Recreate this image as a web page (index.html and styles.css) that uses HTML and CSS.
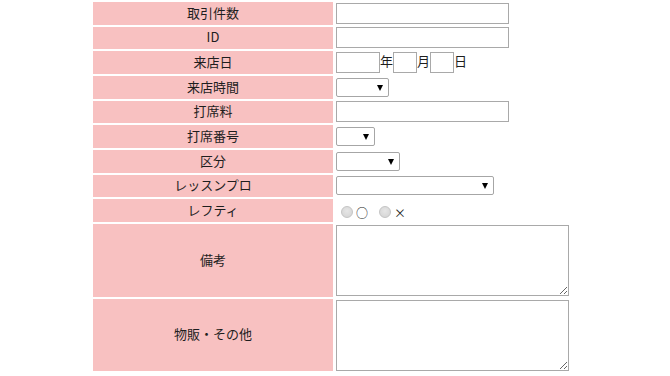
FILE: index.html
```html
<!DOCTYPE html>
<html lang="ja">
<head>
<meta charset="utf-8">
<title>来店登録</title>
<link rel="stylesheet" href="styles.css">
</head>
<body>
<table class="form">
  <tr class="row">
    <th class="label">取引件数</th>
    <td class="value"><input class="text" type="text"></td>
  </tr>
  <tr class="row">
    <th class="label">ID</th>
    <td class="value"><input class="text" type="text"></td>
  </tr>
  <tr class="row">
    <th class="label">来店日</th>
    <td class="value"><input class="text year" type="text">年<input class="text short" type="text">月<input class="text short" type="text">日</td>
  </tr>
  <tr class="row">
    <th class="label">来店時間</th>
    <td class="value"><span class="select w-time"><select><option></option></select></span></td>
  </tr>
  <tr class="row">
    <th class="label">打席料</th>
    <td class="value"><input class="text" type="text"></td>
  </tr>
  <tr class="row">
    <th class="label">打席番号</th>
    <td class="value"><span class="select w-seat"><select><option></option></select></span></td>
  </tr>
  <tr class="row">
    <th class="label">区分</th>
    <td class="value"><span class="select w-kind"><select><option></option></select></span></td>
  </tr>
  <tr class="row">
    <th class="label">レッスンプロ</th>
    <td class="value"><span class="select w-pro"><select><option></option></select></span></td>
  </tr>
  <tr class="row">
    <th class="label">レフティ</th>
    <td class="value"><label class="opt"><input class="radio" type="radio" name="lefty"><span class="mark">○</span></label><label class="opt"><input class="radio" type="radio" name="lefty"><span class="mark">×</span></label></td>
  </tr>
  <tr class="row tall">
    <th class="label">備考</th>
    <td class="value top"><textarea class="area"></textarea></td>
  </tr>
  <tr class="row tall">
    <th class="label">物販・その他</th>
    <td class="value top"><textarea class="area"></textarea></td>
  </tr>
</table>
</body>
</html>
```

FILE: styles.css
```css
html, body {
  background: #ffffff;
}
body {
  margin: 0;
  font-family: "Noto Sans CJK JP", "Noto Sans", sans-serif;
  font-size: 13px;
  color: #1e1e1e;
}
.form {
  margin-left: 91px;
  border-collapse: separate;
  border-spacing: 2px;
}
.label {
  width: 240px;
  height: 21.67px;
  padding: 0 0 1px;
  background: #f8c1c1;
  font-weight: normal;
  text-align: center;
  vertical-align: middle;
  line-height: 16px;
}
.tall .label {
  height: 71.67px;
}
.value {
  width: 234px;
  padding: 0 1px;
  vertical-align: middle;
  white-space: nowrap;
  line-height: 16px;
}
.value.top {
  vertical-align: top;
  padding-top: 1px;
}
.text {
  box-sizing: border-box;
  width: 173px;
  height: 21px;
  margin: 0;
  padding: 1px 2px;
  border: 1px solid #a9a9a9;
  border-radius: 0;
  font: inherit;
  vertical-align: middle;
  background: #fff;
}
.text.year {
  width: 44px;
}
.text.short {
  width: 24px;
}
.select {
  position: relative;
  display: inline-block;
  vertical-align: middle;
}
.select select {
  -webkit-appearance: none;
  appearance: none;
  box-sizing: border-box;
  display: block;
  height: 19px;
  margin: 0;
  padding: 0 2px;
  border: 1px solid #a6a6a6;
  border-radius: 2px;
  background: #fff;
  font: inherit;
}
.select::after {
  content: "";
  position: absolute;
  right: 6px;
  top: 7px;
  border-left: 3px solid transparent;
  border-right: 3px solid transparent;
  border-top: 6px solid #000;
  pointer-events: none;
}
.w-time select { width: 53px; }
.w-seat select { width: 39px; }
.w-kind select { width: 64px; }
.w-pro select { width: 158px; }
.opt {
  display: inline-flex;
  align-items: center;
  vertical-align: middle;
  margin-right: 6px;
}
.radio {
  -webkit-appearance: none;
  appearance: none;
  box-sizing: border-box;
  width: 12px;
  height: 12px;
  margin: 0 3px 0 5px;
  border: 1px solid #c4c4c4;
  border-radius: 50%;
  background: radial-gradient(circle at 50% 40%, #e6e6e6 0, #d2d2d2 100%);
}
.mark {
  font-size: 12px;
  line-height: 12px;
  padding-top: 3px;
  color: #222;
}
.area {
  box-sizing: border-box;
  display: block;
  width: 233px;
  height: 71px;
  margin: 0;
  padding: 2px;
  border: 1px solid #a9a9a9;
  border-radius: 0;
  font: inherit;
  background: #fff;
}
```
